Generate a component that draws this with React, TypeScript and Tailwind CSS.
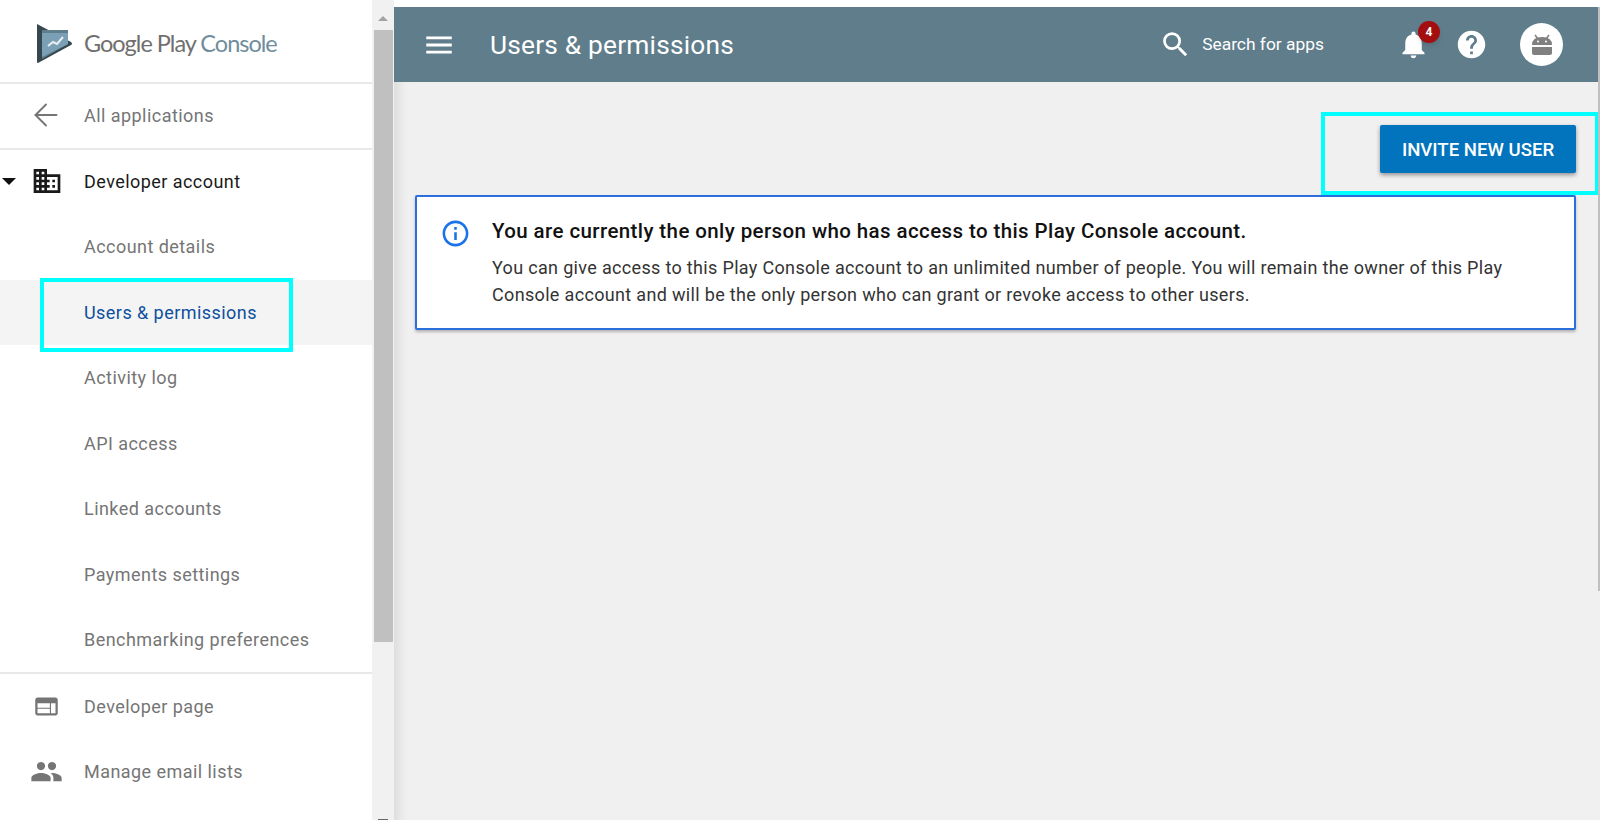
import { ArrowLeft } from "lucide-react";
import { MdBusiness, MdHelp, MdInfoOutline, MdMenu, MdNotifications, MdPeople, MdSearch, MdWeb } from "react-icons/md";

const subItems = ["Account details", "Users & permissions", "Activity log", "API access", "Linked accounts", "Payments settings", "Benchmarking preferences"];

const Logo = () => (
  <svg width="36" height="40" viewBox="0 0 36 40" className="shrink-0">
    <path d="M0 0 L34 18 Q36 20 34 21 L1 39 Q0 39 0 38 Z" fill="#37474f" />
    <path d="M5 6 L31 6 L31 20 L5 35 Z" fill="#607d8b" />
    <path d="M5 9 L31 9 L31 20 L5 33 Z" fill="#7ba0b5" />
    <path d="M11 22 L16 18 L20 20 L26 13" fill="none" stroke="#e8eef1" strokeWidth="2" />
  </svg>
);

const AndroidHead = () => (
  <svg width="26" height="26" viewBox="0 0 26 26">
    <path d="M6 3 L9 7 M20 3 L17 7" stroke="#808080" strokeWidth="1.5" />
    <path d="M3 13 Q3 5 13 5 Q23 5 23 13 Z" fill="#808080" />
    <path d="M3 15 H23 V21 Q23 23 21 23 H5 Q3 23 3 21 Z" fill="#808080" />
    <circle cx="9" cy="9.5" r="1" fill="#fff" />
    <circle cx="17" cy="9.5" r="1" fill="#fff" />
  </svg>
);

const Sidebar = () => (
  <aside className="relative flex h-full w-[372px] shrink-0 flex-col bg-white text-[18px] tracking-[0.45px] text-[#757575]">
    <div className="flex h-[82px] items-center gap-[11px] pl-[37px] pt-[6px]">
      <Logo />
      <span className="text-[23.5px] tracking-[-1px] text-[#6f6f6f]" style={{ fontFamily: "Lato, sans-serif" }}>
        Google Play <span className="text-[#6f8d9c]">Console</span>
      </span>
    </div>
    <div className="flex h-[66px] items-center border-t-2 border-[#e8e8e8] pb-[2px] pl-[28px]">
      <ArrowLeft size={36} strokeWidth={1.25} className="mr-[20px]" />
      <span>All applications</span>
    </div>
    <div className="flex h-[66px] items-center border-t-2 border-[#e8e8e8] pb-[2px] pl-[2px] text-[#1a1a1a]">
      <span className="mr-[15px] h-0 w-0 border-x-[7px] border-t-[7px] border-x-transparent border-t-[#111]" />
      <MdBusiness className="mr-[21px] text-[32px]" />
      <span>Developer account</span>
    </div>
    <div className="flex h-[458px] flex-col overflow-hidden">
      {subItems.map((item) => (
        <div
          key={item}
          className={`flex h-[65.5px] shrink-0 items-center pl-[84px] ${item === "Users & permissions" ? "bg-[#f4f4f4] text-[#0d4f9e]" : ""}`}
        >
          {item}
        </div>
      ))}
    </div>
    <div className="flex h-[67px] items-center border-t-2 border-[#e8e8e8] pb-[1px] pl-[33px]">
      <MdWeb className="mr-[24px] text-[27px]" />
      <span>Developer page</span>
    </div>
    <div className="flex h-[65px] items-center pb-[1px] pl-[30px]">
      <MdPeople className="mr-[21px] text-[33px]" />
      <span>Manage email lists</span>
    </div>
    {/* cyan annotation */}
    <div className="absolute left-[40px] top-[278px] h-[74px] w-[253px] border-4 border-[#00ffff]" />
  </aside>
);

const Scrollbar = () => (
  <div className="flex h-full w-[22px] shrink-0 flex-col items-center bg-[#f1f1f1] pt-[7px]">
    <div className="flex h-[23px] w-full items-center justify-center">
      <span className="h-0 w-0 border-x-[5px] border-b-[5px] border-x-transparent border-b-[#a3a3a3]" />
    </div>
    <div className="h-[612px] w-[19px] bg-[#c0c0c0]" />
    <div className="mt-auto h-[1px] w-[10px] bg-[#666]" />
  </div>
);

const Header = () => (
  <header className="flex h-[75px] shrink-0 items-center bg-[#607d8b] pl-[28px] pr-[37px] text-white">
    <MdMenu className="text-[34px]" />
    <h1 className="ml-[34px] pt-[2px] text-[26.3px] tracking-[0.2px]">Users &amp; permissions</h1>
    <div className="ml-auto flex items-center">
      <MdSearch className="text-[33px]" />
      <span className="ml-[10px] text-[17.4px]">Search for apps</span>
      <div className="relative ml-[73px]">
        <MdNotifications className="text-[33px]" />
        <span className="absolute -right-[10px] -top-[7px] flex h-[22px] w-[22px] items-center justify-center rounded-full bg-[#a50e0e] text-[12px] font-bold shadow-md">
          4
        </span>
      </div>
      <MdHelp className="ml-[25px] text-[33px]" />
      <div className="ml-[32px] flex h-[43px] w-[43px] items-center justify-center rounded-full bg-white">
        <AndroidHead />
      </div>
    </div>
  </header>
);

export default function App() {
  return (
    <div className="flex h-[820px] w-[1600px] overflow-hidden bg-white" style={{ fontFamily: "Roboto, sans-serif" }}>
      <Sidebar />
      <Scrollbar />
      <main className="relative flex h-full flex-1 flex-col pt-[7px]">
        <Header />
        <div className="flex flex-1 flex-col bg-[#f0f0f0] pl-[21px] pr-[24px] pt-[43px] shadow-[inset_14px_0_12px_-10px_rgba(0,0,0,0.1)]">
          <div className="flex justify-end">
            <button className="h-[48px] w-[196px] rounded-[2px] bg-[#0273bd] pt-[3px] text-[18.6px] font-medium text-white shadow-[0_2px_4px_rgba(0,0,0,0.4)]">
              INVITE NEW USER
            </button>
          </div>
          <section className="mt-[22px] flex h-[135px] rounded-[2px] border-2 border-[#2a6fdc] bg-white pl-[23px] pt-[20px] shadow-[0_2px_3px_rgba(0,0,0,0.25)]">
            <MdInfoOutline className="mt-[1px] shrink-0 text-[31px] text-[#1a73e8]" />
            <div className="ml-[21px] w-[1040px]">
              <h2 className="text-[20.5px] font-medium leading-[28px] tracking-[0.4px] text-[#111]">
                You are currently the only person who has access to this Play Console account.
              </h2>
              <p className="mt-[10px] text-[18px] leading-[26.5px] tracking-[0.33px] text-[#333]">
                You can give access to this Play Console account to an unlimited number of people. You will remain the owner of this Play Console account and will be the only person who can grant or revoke access to other users.
              </p>
            </div>
          </section>
        </div>
        <div className="absolute right-[1px] top-[112px] h-[83px] w-[278px] border-4 border-[#00ffff]" />
        <div className="absolute right-0 top-[7px] h-[584px] w-[2px] bg-[#c0c0c0]" />
      </main>
    </div>
  );
}
